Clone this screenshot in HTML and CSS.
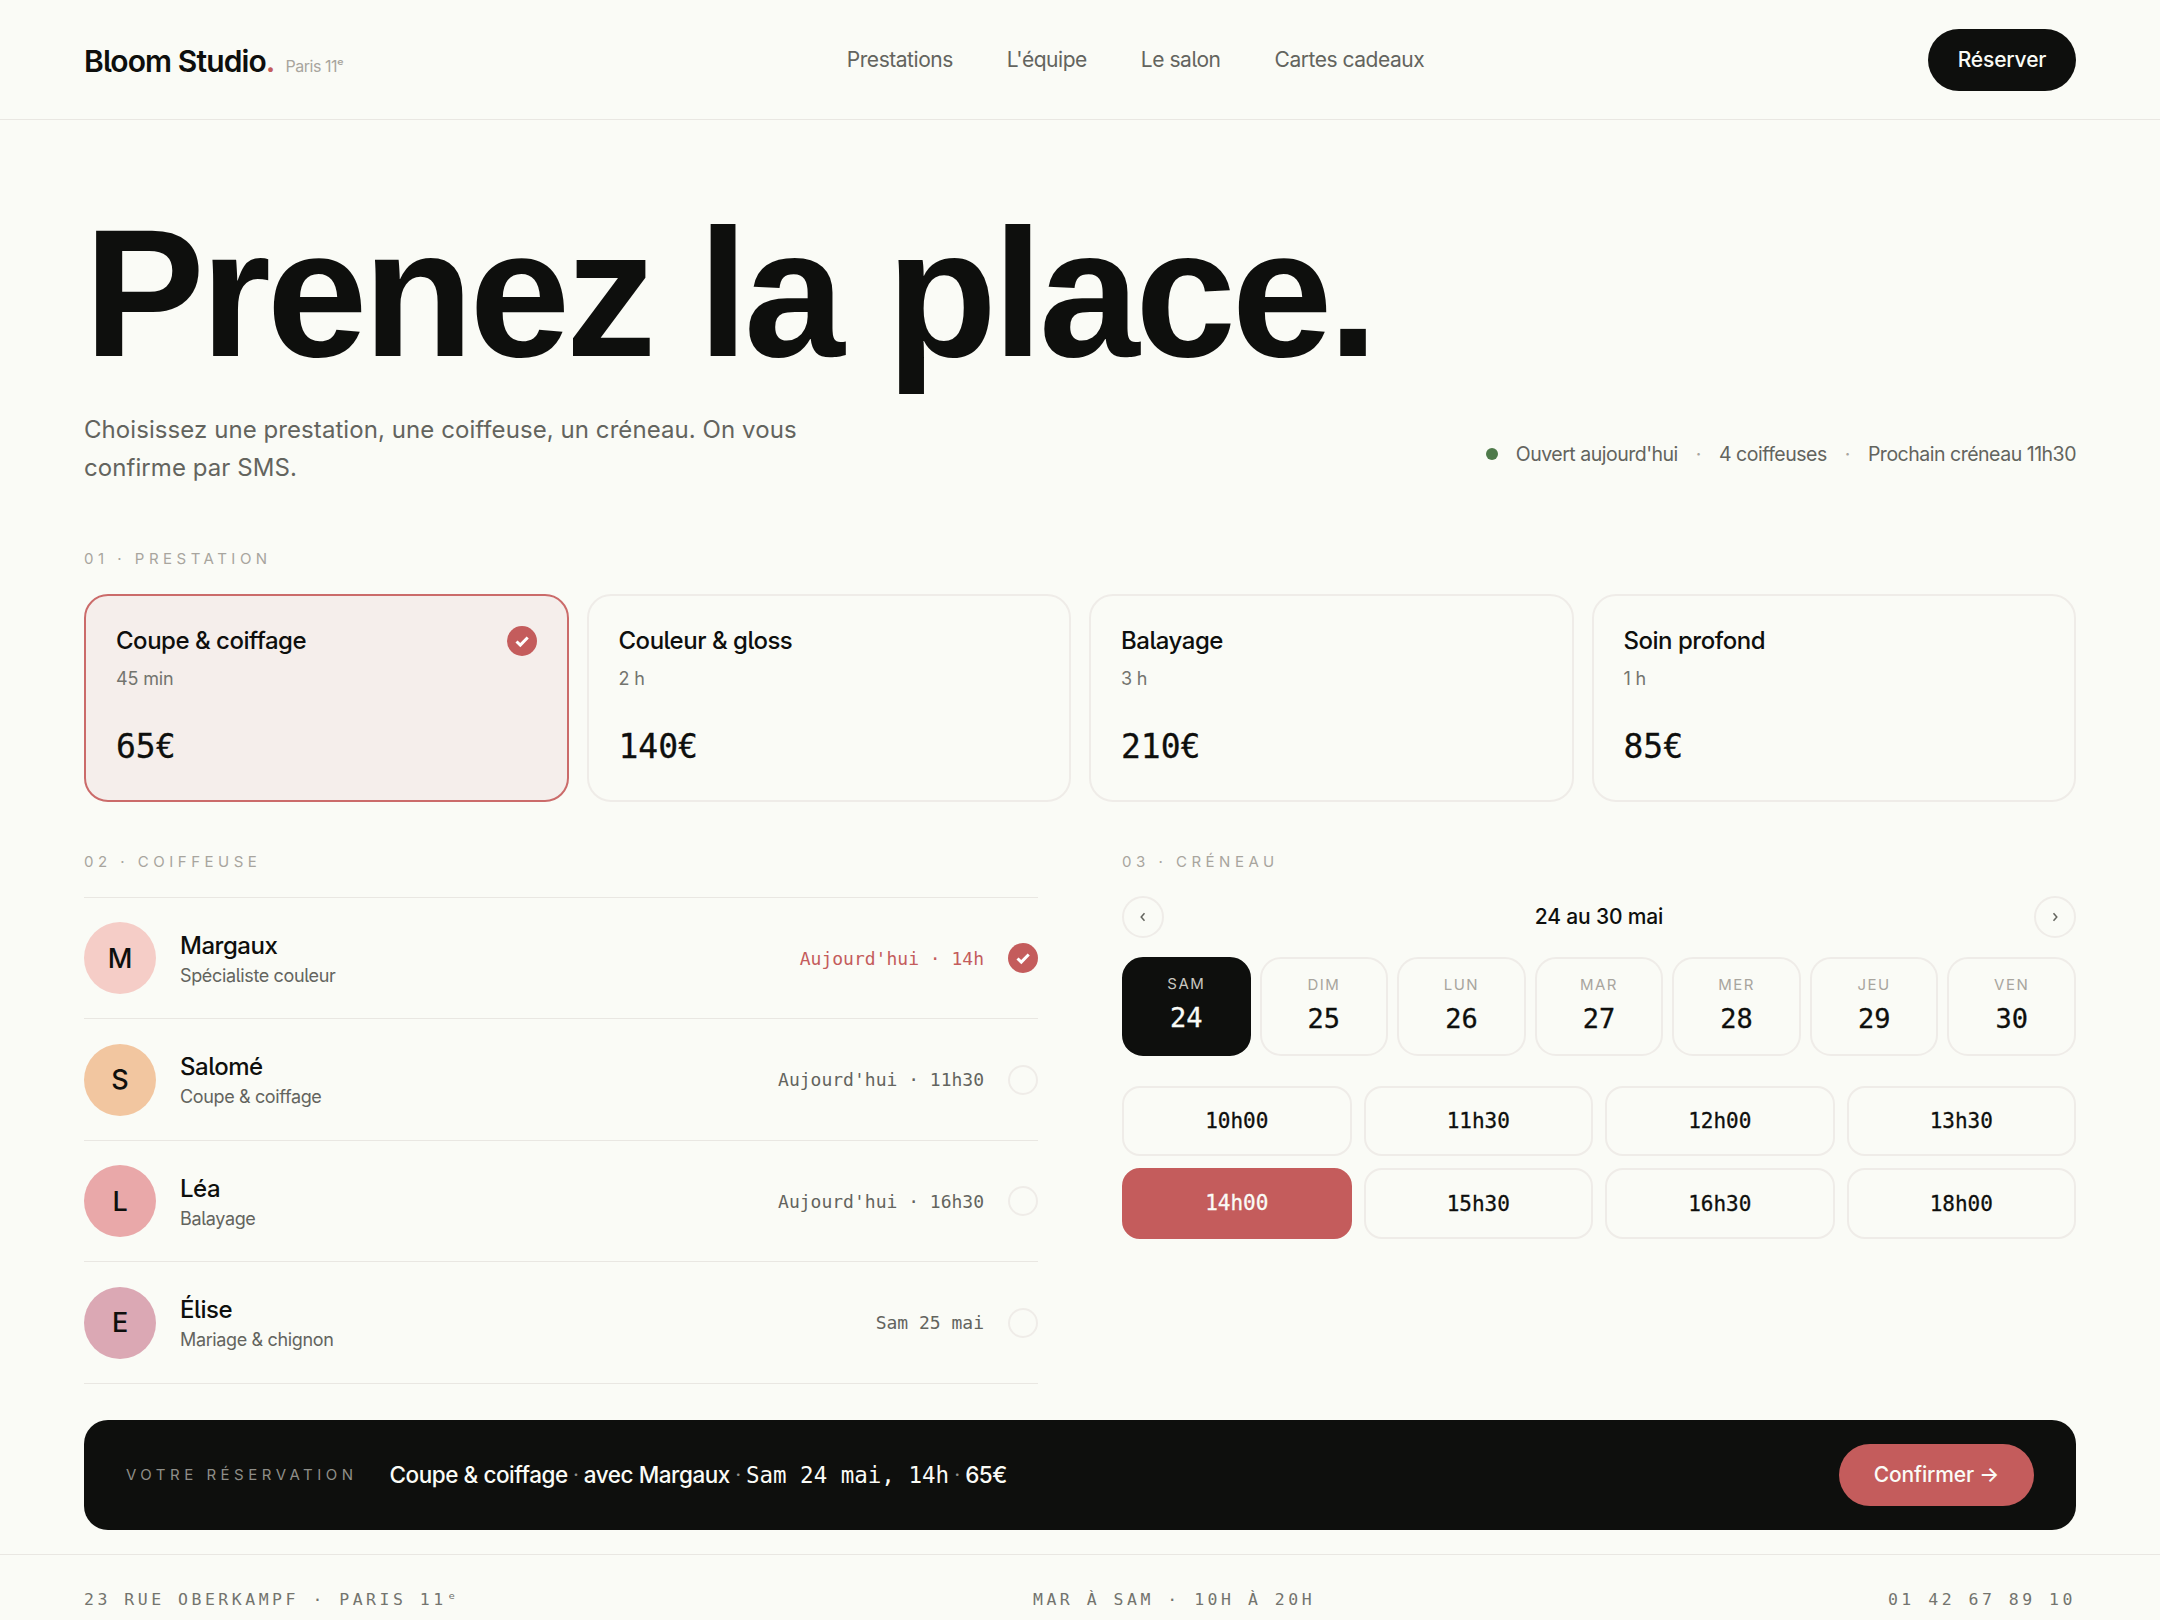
FILE: index.html
```html
<!DOCTYPE html>
<html lang="fr">
<head>
<meta charset="utf-8">
<title>Bloom Studio</title>
<link rel="stylesheet" href="styles.css">
</head>
<body>
<header class="topbar">
  <div class="brand"><span class="brand-name">Bloom Studio<span class="accent">.</span></span><span class="brand-place">Paris 11ᵉ</span></div>
  <nav class="nav"><a>Prestations</a><a>L'équipe</a><a>Le salon</a><a>Cartes cadeaux</a></nav>
  <button class="cta">Réserver</button>
</header>
<main class="page">
  <section class="hero">
    <h1>Prenez la place.</h1>
    <div class="hero-foot">
      <p class="lead">Choisissez une prestation, une coiffeuse, un créneau. On vous confirme par SMS.</p>
      <div class="status"><i class="dot"></i><span>Ouvert aujourd'hui</span><b>·</b><span>4 coiffeuses</span><b>·</b><span>Prochain créneau 11h30</span></div>
    </div>
  </section>
  <section class="services-block">
    <div class="label">01 · PRESTATION</div>
    <div class="services">
      <article class="service selected">
        <div class="service-top"><h3>Coupe &amp; coiffage</h3><span class="tick big"><svg viewBox="0 0 24 24"><path d="M6.5 12.5l3.8 3.6 7.4-7.6"/></svg></span></div>
        <div class="dur">45 min</div><div class="price">65€</div>
      </article>
      <article class="service"><div class="service-top"><h3>Couleur &amp; gloss</h3></div><div class="dur">2 h</div><div class="price">140€</div></article>
      <article class="service"><div class="service-top"><h3>Balayage</h3></div><div class="dur">3 h</div><div class="price">210€</div></article>
      <article class="service"><div class="service-top"><h3>Soin profond</h3></div><div class="dur">1 h</div><div class="price">85€</div></article>
    </div>
  </section>
  <section class="columns">
    <div class="col">
      <div class="label">02 · COIFFEUSE</div>
      <ul class="staff">
        <li class="person"><span class="avatar a1">M</span><div class="who"><strong>Margaux</strong><small>Spécialiste couleur</small></div><span class="when hot">Aujourd'hui · 14h</span><span class="tick"><svg viewBox="0 0 24 24"><path d="M6.5 12.5l3.8 3.6 7.4-7.6"/></svg></span></li>
        <li class="person"><span class="avatar a2">S</span><div class="who"><strong>Salomé</strong><small>Coupe &amp; coiffage</small></div><span class="when">Aujourd'hui · 11h30</span><span class="radio"></span></li>
        <li class="person"><span class="avatar a3">L</span><div class="who"><strong>Léa</strong><small>Balayage</small></div><span class="when">Aujourd'hui · 16h30</span><span class="radio"></span></li>
        <li class="person"><span class="avatar a4">E</span><div class="who"><strong>Élise</strong><small>Mariage &amp; chignon</small></div><span class="when">Sam 25 mai</span><span class="radio"></span></li>
      </ul>
    </div>
    <div class="col">
      <div class="label">03 · CRÉNEAU</div>
      <div class="week-head">
        <button class="arrow"><svg viewBox="0 0 12 12"><path d="M7 3.5L4.8 6 7 8.5"/></svg></button>
        <span>24 au 30 mai</span>
        <button class="arrow"><svg viewBox="0 0 12 12"><path d="M5 3.5L7.2 6 5 8.5"/></svg></button>
      </div>
      <div class="days">
        <div class="day on"><span>SAM</span><strong>24</strong></div>
        <div class="day"><span>DIM</span><strong>25</strong></div>
        <div class="day"><span>LUN</span><strong>26</strong></div>
        <div class="day"><span>MAR</span><strong>27</strong></div>
        <div class="day"><span>MER</span><strong>28</strong></div>
        <div class="day"><span>JEU</span><strong>29</strong></div>
        <div class="day"><span>VEN</span><strong>30</strong></div>
      </div>
      <div class="slots">
        <div class="slot">10h00</div><div class="slot">11h30</div><div class="slot">12h00</div><div class="slot">13h30</div>
        <div class="slot on">14h00</div><div class="slot">15h30</div><div class="slot">16h30</div><div class="slot">18h00</div>
      </div>
    </div>
  </section>
  <section class="summary">
    <span class="summary-label">VOTRE RÉSERVATION</span>
    <div class="summary-text"><span>Coupe &amp; coiffage</span><i>·</i><span>avec Margaux</span><i>·</i><span class="mono">Sam 24 mai, 14h</span><i>·</i><span>65€</span></div>
    <button class="confirm">Confirmer →</button>
  </section>
</main>
<footer class="foot"><span>23 RUE OBERKAMPF · PARIS 11ᵉ</span><span>MAR À SAM · 10H À 20H</span><span>01 42 67 89 10</span></footer>
</body>
</html>
```
FILE: styles.css
```css
* { box-sizing: border-box; margin: 0; padding: 0; }
html, body { height: 1620px; overflow: hidden; }
body { background: #fafbf6; color: #0e0f0d; font-family: "Inter", "Liberation Sans", sans-serif; font-feature-settings: "cv05" 1; letter-spacing: -0.01em; }
button { font: inherit; letter-spacing: inherit; border: 0; }
.topbar { height: 120px; padding: 0 84px; border-bottom: 1px solid #e9e7e2; display: flex; justify-content: space-between; align-items: center; }
.brand { display: flex; align-items: baseline; gap: 11px; padding-top: 3px; }
.brand-name { font-size: 30px; font-weight: 600; letter-spacing: -0.03em; }
.accent { color: #c45c5c; }
.brand-place { font-size: 16px; color: #a8a59e; letter-spacing: -0.03em; }
.nav { display: flex; gap: 54px; font-size: 21px; letter-spacing: -0.022em; color: #63645e; }
.cta { height: 62px; width: 148px; border-radius: 31px; background: #0e0f0d; color: #fafbf6; font-size: 21px; font-weight: 500; }
.page { padding: 0 84px; }
.hero { padding-top: 82px; }
h1 { font-family: "Liberation Sans", sans-serif; font-size: 181px; line-height: 182px; font-weight: 700; letter-spacing: -0.0235em; }
.hero-foot { display: flex; justify-content: space-between; align-items: flex-end; margin-top: 27px; }
.lead { width: 740px; font-size: 24px; line-height: 38.4px; letter-spacing: 0.003em; color: #63645e; }
.status { display: flex; align-items: center; gap: 18px; font-size: 19.5px; letter-spacing: -0.025em; color: #63645e; padding-bottom: 22px; }
.status b { font-weight: 400; color: #a8a59e; }
.dot { width: 12px; height: 12px; border-radius: 50%; background: #4e7a4a; margin-right: 0; }
.label { font-size: 15px; letter-spacing: 0.3em; color: #a8a59e; line-height: 20px; }
.services-block { margin-top: 61px; }
.services { margin-top: 25px; display: grid; grid-template-columns: repeat(4, 1fr); gap: 18px; }
.service { height: 208px; padding: 30px; border: 2px solid #efece8; border-radius: 24px; }
.service.selected { background: #f5eeeb; border-color: #cb6b6a; }
.service-top { display: flex; justify-content: space-between; align-items: center; height: 30px; }
h3 { font-size: 24px; font-weight: 500; letter-spacing: -0.02em; }
.tick { flex: none; width: 30px; height: 30px; border-radius: 50%; background: #c45c5c; display: flex; align-items: center; justify-content: center; }
.tick svg { width: 24px; height: 24px; fill: none; stroke: #fff; stroke-width: 3; }
.dur { margin-top: 12px; font-size: 18px; color: #73746e; }
.price { margin-top: 38px; font-family: "DejaVu Sans Mono", monospace; font-size: 33px; letter-spacing: 0; -webkit-text-stroke: 0.3px currentColor; }
.columns { margin-top: 50px; display: grid; grid-template-columns: 1fr 1fr; gap: 84px; }
.staff { list-style: none; margin-top: 25px; border-top: 1px solid #e9e7e2; }
.person { height: 121.5px; display: flex; align-items: center; border-bottom: 1px solid #e9e7e2; }
.avatar { width: 72px; height: 72px; border-radius: 50%; display: flex; align-items: center; justify-content: center; font-size: 27px; font-weight: 500; }
.a1 { background: #f5cdc7; } .a2 { background: #f2c6a0; } .a3 { background: #e9a8a9; } .a4 { background: #dba8b4; }
.who { flex: 1; margin-left: 24px; display: flex; flex-direction: column; gap: 5px; }
.who strong { font-size: 24px; font-weight: 500; letter-spacing: -0.02em; }
.who small { font-size: 18px; color: #63645e; letter-spacing: -0.02em; }
.when { font-family: "DejaVu Sans Mono", monospace; font-size: 18px; letter-spacing: 0; color: #63645e; margin-right: 24px; }
.when.hot { color: #c45c5c; }
.radio { width: 30px; height: 30px; border-radius: 50%; border: 2px solid #efece8; }
.week-head { margin-top: 24px; height: 42px; display: flex; align-items: center; justify-content: space-between; font-size: 21px; font-weight: 500; }
.arrow { width: 42px; height: 42px; border-radius: 50%; border: 2px solid #efece8; background: none; display: flex; align-items: center; justify-content: center; }
.arrow svg { width: 18px; height: 18px; fill: none; stroke: #63645e; stroke-width: 1; }
.days { margin-top: 19px; display: grid; grid-template-columns: repeat(7, 1fr); gap: 9px; }
.day { height: 99px; border: 2px solid #efece8; border-radius: 21px; display: flex; flex-direction: column; align-items: center; padding-top: 16px; }
.day span { font-size: 15px; letter-spacing: 0.1em; color: #a8a59e; line-height: 20px; }
.day strong { font-family: "DejaVu Sans Mono", monospace; margin-top: 8px; font-size: 27px; font-weight: 500; letter-spacing: 0; -webkit-text-stroke: 0.3px currentColor; }
.day.on { background: #0e0f0d; color: #fafbf6; border-color: #0e0f0d; padding-top: 15px; }
.day.on span { color: #c9c7c0; }
.slots { margin-top: 30px; display: grid; grid-template-columns: repeat(4, 1fr); gap: 12px; }
.slot { height: 70.5px; border: 2px solid #efece8; border-radius: 18px; display: flex; align-items: center; justify-content: center; font-family: "DejaVu Sans Mono", monospace; font-size: 21px; letter-spacing: 0; font-weight: 500; -webkit-text-stroke: 0.3px currentColor; }
.slot.on { background: #c45c5c; border-color: #c45c5c; color: #fafbf6; padding-bottom: 2px; }
.summary { margin-top: 36px; height: 110px; padding: 0 42px; border-radius: 24px; background: #0e0f0d; color: #fafbf6; display: flex; align-items: center; }
.summary-label { font-size: 15px; letter-spacing: 0.3em; color: #8e8e88; }
.summary-text { flex: 1; margin-left: 32px; display: flex; align-items: center; gap: 5.5px; font-size: 22.5px; font-weight: 500; letter-spacing: -0.02em; }
.summary-text i { font-style: normal; color: #8e8e88; font-size: 18px; }
.mono { font-family: "DejaVu Sans Mono", monospace; font-weight: 400; letter-spacing: 0; }
.confirm { width: 195px; height: 62px; border-radius: 31px; background: #c45c5c; color: #fafbf6; font-size: 21px; font-weight: 500; }
.foot { margin-top: 24px; padding: 35px 84px 0; border-top: 1px solid #e9e7e2; display: flex; justify-content: space-between; font-family: "DejaVu Sans Mono", monospace; font-size: 16.5px; letter-spacing: 3.5px; color: #73746e; }
```
